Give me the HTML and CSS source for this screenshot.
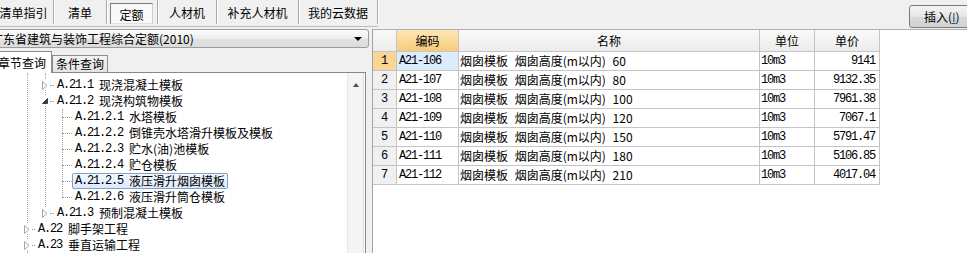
FILE: index.html
```html
<!DOCTYPE html>
<html lang="zh">
<head>
<meta charset="utf-8">
<title>定额</title>
<link rel="stylesheet" href="styles.css">
</head>
<body>
<div class="topbar">
  <div class="tabs">
    <div class="tab t1">清单指引</div>
    <div class="tab t2">清单</div>
    <div class="tab t3"><span class="pressed">定额</span></div>
    <div class="tab t4">人材机</div>
    <div class="tab t5">补充人材机</div>
    <div class="tab t6">我的云数据</div>
  </div>
  <button class="insert">插入(<u>I</u>)</button>
</div>
<div class="main">
  <div class="left">
    <div class="combo"><span class="combo-text">广东省建筑与装饰工程综合定额(2010)</span><span class="combo-arrow"></span></div>
    <div class="subtabs">
      <div class="subtab active">章节查询</div>
      <div class="subtab">条件查询</div>
    </div>
    <div class="treebox">
      <div class="tree">
        <div class="tree-inner">
          <span class="vline v0"></span>
          <span class="vline v1"></span>
          <span class="vline v2"></span>
          <div class="node l1"><span class="exp"><svg width="6" height="9" viewBox="0 0 6 9"><path d="M0.5 0.5 L5 4.5 L0.5 8.5 Z" fill="#fff" stroke="#a8a8a8"/></svg></span><span class="hline"></span><span class="label"><span class="num">A.21.1</span>现浇混凝土模板</span></div>
          <div class="node l1"><span class="exp"><svg width="6" height="6" viewBox="0 0 6 6"><path d="M5.5 0.5 L5.5 5.5 L0.5 5.5 Z" fill="#3c3c3c" stroke="#3c3c3c"/></svg></span><span class="hline"></span><span class="label"><span class="num">A.21.2</span>现浇构筑物模板</span></div>
          <div class="node l2"><span class="hline"></span><span class="label"><span class="num">A.21.2.1</span>水塔模板</span></div>
          <div class="node l2"><span class="hline"></span><span class="label"><span class="num">A.21.2.2</span>倒锥壳水塔滑升模板及模板</span></div>
          <div class="node l2"><span class="hline"></span><span class="label"><span class="num">A.21.2.3</span>贮水(油)池模板</span></div>
          <div class="node l2"><span class="hline"></span><span class="label"><span class="num">A.21.2.4</span>贮仓模板</span></div>
          <div class="node l2"><span class="hline"></span><span class="label selected"><span class="num">A.21.2.5</span>液压滑升烟囱模板</span></div>
          <div class="node l2"><span class="hline"></span><span class="label"><span class="num">A.21.2.6</span>液压滑升筒仓模板</span></div>
          <div class="node l1"><span class="exp"><svg width="6" height="9" viewBox="0 0 6 9"><path d="M0.5 0.5 L5 4.5 L0.5 8.5 Z" fill="#fff" stroke="#a8a8a8"/></svg></span><span class="hline"></span><span class="label"><span class="num">A.21.3</span>预制混凝土模板</span></div>
          <div class="node l0"><span class="exp"><svg width="6" height="9" viewBox="0 0 6 9"><path d="M0.5 0.5 L5 4.5 L0.5 8.5 Z" fill="#fff" stroke="#a8a8a8"/></svg></span><span class="hline"></span><span class="label"><span class="num">A.22</span>脚手架工程</span></div>
          <div class="node l0"><span class="exp"><svg width="6" height="9" viewBox="0 0 6 9"><path d="M0.5 0.5 L5 4.5 L0.5 8.5 Z" fill="#fff" stroke="#a8a8a8"/></svg></span><span class="hline"></span><span class="label"><span class="num">A.23</span>垂直运输工程</span></div>
        </div>
      </div>
      <div class="vscroll"><span class="up"></span></div>
    </div>
  </div>
  <div class="grid">
    <table class="quota">
      <colgroup>
        <col class="c-no"><col class="c-code"><col class="c-name"><col class="c-unit"><col class="c-price">
      </colgroup>
      <thead>
        <tr><th></th><th class="sorted">编码</th><th>名称</th><th>单位</th><th>单价</th></tr>
      </thead>
      <tbody>
        <tr class="current"><td class="no">1</td><td class="code">A21-106</td><td class="name">烟囱模板 烟囱高度(m以内) 60</td><td class="unit">10m3</td><td class="price">9141</td></tr>
        <tr><td class="no">2</td><td class="code">A21-107</td><td class="name">烟囱模板 烟囱高度(m以内) 80</td><td class="unit">10m3</td><td class="price">9132.35</td></tr>
        <tr><td class="no">3</td><td class="code">A21-108</td><td class="name">烟囱模板 烟囱高度(m以内) 100</td><td class="unit">10m3</td><td class="price">7961.38</td></tr>
        <tr><td class="no">4</td><td class="code">A21-109</td><td class="name">烟囱模板 烟囱高度(m以内) 120</td><td class="unit">10m3</td><td class="price">7067.1</td></tr>
        <tr><td class="no">5</td><td class="code">A21-110</td><td class="name">烟囱模板 烟囱高度(m以内) 150</td><td class="unit">10m3</td><td class="price">5791.47</td></tr>
        <tr><td class="no">6</td><td class="code">A21-111</td><td class="name">烟囱模板 烟囱高度(m以内) 180</td><td class="unit">10m3</td><td class="price">5106.85</td></tr>
        <tr><td class="no">7</td><td class="code">A21-112</td><td class="name">烟囱模板 烟囱高度(m以内) 210</td><td class="unit">10m3</td><td class="price">4017.04</td></tr>
      </tbody>
    </table>
  </div>
</div>
</body>
</html>
```
FILE: styles.css
```css
html, body {
  margin: 0;
  padding: 0;
}
body {
  width: 967px;
  height: 253px;
  overflow: hidden;
  background: #f0f0f0;
  font-family: "Noto Sans CJK SC", sans-serif;
  font-size: 12px;
  color: #000;
}

/* ---------- top bar ---------- */
.topbar {
  display: flex;
  height: 28px;
  align-items: flex-start;
}
.tabs {
  display: flex;
  margin-left: -6px;
  height: 26px;
  border-bottom: 1px solid #bcbcbc;
}
.tab {
  box-sizing: border-box;
  height: 24px;
  padding-top: 2px;
  display: flex;
  align-items: center;
  justify-content: center;
  border-right: 1px solid #a9a9a9;
  box-shadow: 1px 0 0 #ffffff;
  line-height: 14px;
  white-space: nowrap;
}
.t1 { width: 60px; }
.t2 { width: 53px; }
.t3 { width: 51px; padding-left: 3px; padding-right: 4px; }
.t4 { width: 59px; }
.t5 { width: 82px; }
.t6 { width: 79px; }
.pressed {
  box-sizing: border-box;
  width: 43px;
  height: 21px;
  display: flex;
  align-items: center;
  justify-content: center;
  padding-top: 2px;
  margin-top: 1px;
  border: 1px solid;
  border-color: #7c7c7c #cfcfcf #e0e0e0 #7c7c7c;
  background: #f9f9f9;
}
.insert {
  margin-left: auto;
  margin-top: 5px;
  margin-right: -10px;
  box-sizing: border-box;
  width: 68px;
  height: 23px;
  padding: 0 0 0 14px;
  text-align: left;
  border: 1px solid #7a7a7a;
  border-radius: 3px;
  background: linear-gradient(#f4f4f4, #e6e6e6 50%, #dadada 51%, #d2d2d2);
  font-family: "Noto Sans CJK SC", sans-serif;
  font-size: 12px;
  color: #000;
  line-height: 14px;
}
.insert u {
  color: #1f4f9a;
}

/* ---------- main ---------- */
.main {
  display: flex;
  height: 225px;
}
.left {
  flex: none;
  width: 380px;
  margin-left: -10px;
}
.combo {
  box-sizing: border-box;
  width: 379px;
  height: 19px;
  margin-top: 1px;
  border: 1px solid #9b9b9b;
  border-radius: 3px;
  background: linear-gradient(#fdfdfd, #eeeeee 50%, #e2e2e2 51%, #dcdcdc);
  display: flex;
  align-items: center;
  padding-left: 0;
  padding-right: 6px;
  line-height: 14px;
}
.combo-text {
  flex: 1;
  white-space: nowrap;
}
.combo-arrow {
  width: 0;
  height: 0;
  border-left: 4px solid transparent;
  border-right: 4px solid transparent;
  border-top: 4px solid #000;
}

.subtabs {
  display: flex;
  align-items: flex-end;
  height: 21px;
  margin-top: 3px;
  position: relative;
  z-index: 1;
}
.subtab {
  box-sizing: border-box;
  width: 56px;
  height: 17px;
  border: 1px solid #8a8d94;
  border-bottom: none;
  background: linear-gradient(#f3f3f3, #e4e4e4);
  display: flex;
  align-items: center;
  justify-content: center;
  line-height: 14px;
  white-space: nowrap;
}
.subtab.active {
  width: 62px;
  height: 22px;
  margin-bottom: -1px;
  background: #fff;
  padding-left: 2px;
}

.treebox {
  box-sizing: border-box;
  width: 376px;
  height: 190px;
  border: 1px solid #828790;
  background: #fff;
  display: flex;
}
.tree {
  flex: 1;
  overflow: hidden;
}
.tree-inner {
  position: relative;
  margin-left: 9px;
  padding-top: 4px;
  height: 200px;
}
.vline {
  position: absolute;
  width: 0;
  border-left: 1px dotted #a0a0a0;
}
.v0 { left: 27px; top: 0; height: 200px; }
.v1 { left: 45px; top: 0; height: 140px; }
.v2 { left: 62px; top: 36px; height: 88px; }

.node {
  position: relative;
  height: 16px;
  display: flex;
  align-items: center;
  white-space: nowrap;
}
.node.l0 { padding-left: 22px; }
.node.l1 { padding-left: 40px; }
.node.l2 { padding-left: 62px; }
.exp {
  width: 10px;
  height: 10px;
  display: flex;
  align-items: center;
  justify-content: center;
  background: #fff;
  position: relative;
  z-index: 1;
}
.hline {
  height: 0;
  border-top: 1px dotted #a0a0a0;
}
.l0 .hline { width: 3px; }
.l1 .hline { width: 4px; }
.l2 .hline { width: 10px; }
.label {
  box-sizing: border-box;
  height: 16px;
  display: flex;
  align-items: center;
  padding: 0 2px;
  border: 1px solid transparent;
  border-radius: 2px;
  line-height: 14px;
  font-size: 12px;
}
.label.selected {
  border-color: #7da2ce;
  background: linear-gradient(#f3f8fe, #dbeafc);
}
.num {
  font-family: "Liberation Mono", monospace;
  font-size: 12px;
  letter-spacing: -1.2px;
  margin-right: 6px;
}

.vscroll {
  flex: none;
  box-sizing: border-box;
  width: 17px;
  margin-right: 1px;
  border-left: 1px solid #e6e6e6;
  border-right: 1px solid #dcdcdc;
  background: #f4f4f4;
  display: flex;
  justify-content: center;
  padding-top: 10px;
}
.up {
  width: 0;
  height: 0;
  border-left: 3px solid transparent;
  border-right: 3px solid transparent;
  border-bottom: 4px solid #505050;
}

/* ---------- grid ---------- */
.grid {
  flex: 1;
  margin-left: 2px;
  margin-top: 1px;
  border-left: 1px solid #a3a3a3;
  border-top: 1px solid #b0b0b0;
  background: #fff;
}
.quota {
  table-layout: fixed;
  border-collapse: separate;
  border-spacing: 0;
  width: 507px;
}
.c-no { width: 24px; }
.c-code { width: 62px; }
.c-name { width: 301px; }
.c-unit { width: 55px; }
.c-price { width: 65px; }
.quota th,
.quota td {
  box-sizing: border-box;
  border-right: 1px solid #c4c4c4;
  border-bottom: 1px solid #c4c4c4;
  padding: 0;
  white-space: nowrap;
  overflow: hidden;
}
.quota th {
  height: 22px;
  font-weight: normal;
  font-size: 12px;
  line-height: 14px;
  background: linear-gradient(#f9f9f9, #ececec);
  text-align: center;
}
.quota th.sorted {
  background: linear-gradient(#fde7b7, #f7cb78);
}
.quota td {
  height: 19px;
  line-height: 14px;
}
.quota td.no {
  background: #f0f0f0;
  text-align: center;
  font-family: "Liberation Mono", monospace;
  font-size: 12px;
}
.quota tr.current td.no {
  background: #fbd594;
}
.quota tr.current td.code {
  background: #ddecfc;
}
.quota td.code,
.quota td.unit,
.quota td.price {
  font-family: "Liberation Mono", monospace;
  font-size: 12px;
  letter-spacing: -1.2px;
}
.quota td.code { padding-left: 2px; }
.quota td.unit { padding-left: 1px; }
.quota td.name {
  padding-left: 1px;
  font-size: 12px;
  word-spacing: 4px;
}
.quota td.price {
  text-align: right;
  padding-right: 4px;
}
```
